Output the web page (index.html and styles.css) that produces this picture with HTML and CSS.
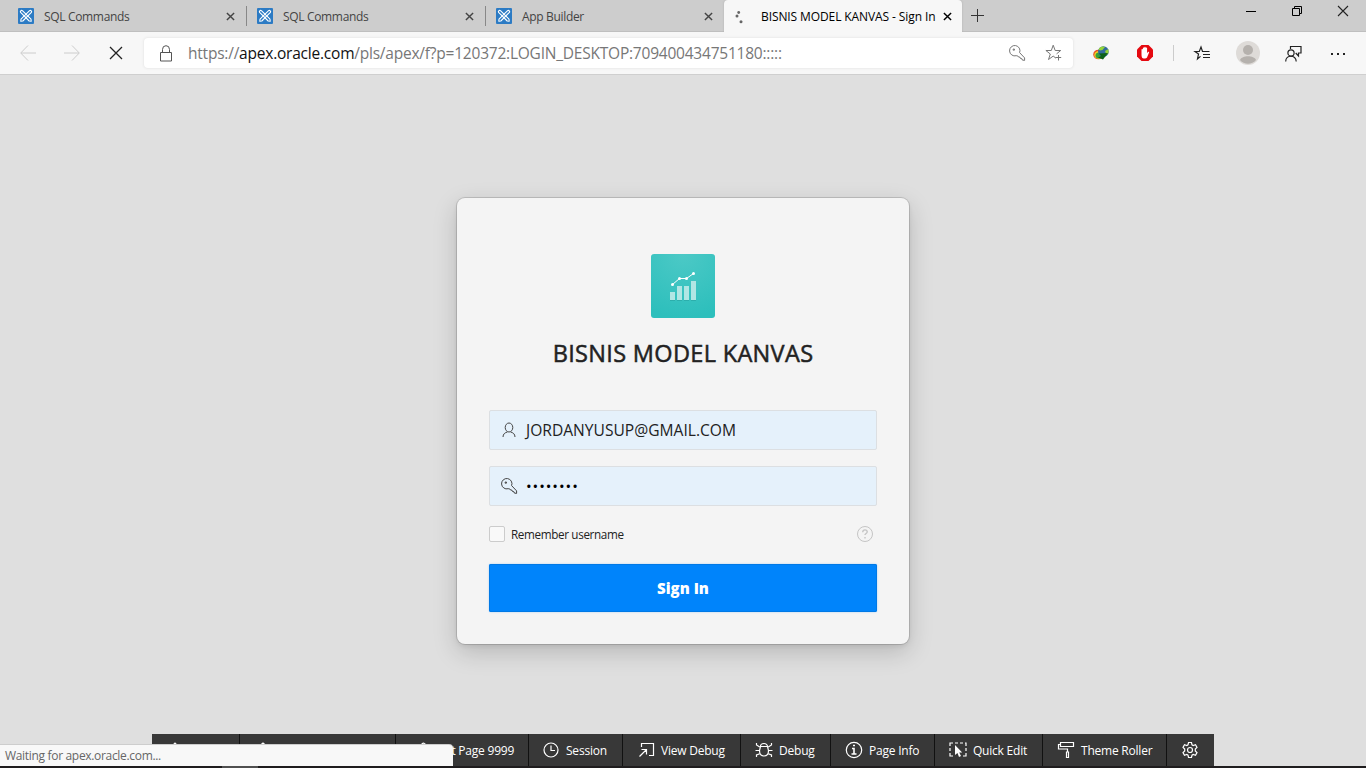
FILE: index.html
```html
<!DOCTYPE html>
<html lang="en">
<head>
<meta charset="utf-8">
<title>BISNIS MODEL KANVAS - Sign In</title>
<link rel="stylesheet" href="styles.css">
</head>
<body>
<svg width="0" height="0" class="defs">
  <symbol id="apex" viewBox="0 0 16 16"><rect width="16" height="16" rx="1" fill="#2c7bc4"/><g fill="none" stroke="#fff" stroke-width="1.1" stroke-linejoin="round"><path d="M2.6 4.4a1.3 1.3 0 0 1 1.800-1.800L13 11.200 13.200 13.200 11.200 13Z"/><path d="M13.400 4.400a1.300 1.300 0 0 0-1.800-1.800L3 11.200 2.800 13.200 4.800 13Z"/></g></symbol>
  <symbol id="close" viewBox="0 0 10 10"><path d="M1 1 9 9M9 1 1 9" fill="none" stroke="currentColor" stroke-width="1.600"/></symbol>
  <symbol id="key" viewBox="0 0 18 18"><path d="M11.6 8.6A5.2 5.2 0 1 0 8.2 11.7L9.7 11.9 10.5 13 12 13.2 12.5 14.5 14 14.8 14.4 16.1 16.6 16.4 16.6 13.9Z M5.2 5h1.2v1.2H5.2Z" fill="none" stroke="currentColor"/></symbol>
</svg>
<div class="screen">
  <header class="tabs">
    <div class="tab"><svg class="fav"><use href="#apex"/></svg><span>SQL Commands</span><svg class="x"><use href="#close"/></svg></div>
    <div class="tab line"><svg class="fav"><use href="#apex"/></svg><span>SQL Commands</span><svg class="x"><use href="#close"/></svg></div>
    <div class="tab line"><svg class="fav"><use href="#apex"/></svg><span class="app">App Builder</span><svg class="x"><use href="#close"/></svg></div>
    <div class="tab active"><svg class="fav" viewBox="0 0 16 16" fill="#666"><circle cx="3.7" cy="4.5" r="1.4"/><circle cx="2" cy="8" r="1.5"/><circle cx="6" cy="13.7" r="1.5"/></svg><span class="current">BISNIS MODEL KANVAS - Sign In</span><svg class="x"><use href="#close"/></svg></div>
    <svg class="plus" viewBox="0 0 14 14"><path d="M7.5 1v13M1 7.5h13" stroke="#333" fill="none"/></svg>
    <div class="window">
      <svg width="10" height="12"><path d="M0 6.5h10" stroke="#000"/></svg>
      <svg width="10" height="12" fill="none" stroke="#000"><path d="M.5 3.5h7v7h-7ZM2.5 3.5v-2h7v7h-2"/></svg>
      <svg width="12" height="12" stroke="#222" stroke-width="1.1"><path d="M1 1 11 11M11 1 1 11"/></svg>
    </div>
  </header>
  <nav class="bar">
    <div class="navs">
      <svg width="16" height="16" fill="none" stroke="#ccc"><path d="M8 .5.7 8 8 15.500M1 8h15"/></svg>
      <svg width="16" height="16" fill="none" stroke="#ccc"><path d="M8 .5 15.300 8 8 15.500M0 8h15"/></svg>
      <svg width="14" height="14" fill="none" stroke="#222" stroke-width="1.3"><path d="M1 1 13 13M13 1 1 13"/></svg>
    </div>
    <div class="address">
      <svg class="lock" width="14" height="17" fill="none" stroke="#555"><path d="M1.500 7.500h11v8.500h-11ZM3.500 7.500V4.500a3.500 3.800 0 0 1 7 0v3"/></svg>
      <span class="url">https://<b>apex.oracle.com</b>/pls/apex/f?p=120372:LOGIN_DESKTOP:709400434751180:::::</span>
      <svg class="akey" width="18" height="18"><use href="#key"/></svg>
      <svg width="18" height="18" fill="none" stroke="#777"><path d="M11 14.200 8.200 12.100 3.500 15.500 5.300 10 .9 6.500h5.400L8.200 1.200l2 5.300h5.500L11.600 9.800M13.500 11v5.500M10.700 13.500h5.500"/></svg>
    </div>
    <div class="extras">
      <svg class="idm" viewBox="0 0 16 16"><ellipse cx="5.500" cy="9.500" rx="5.300" ry="4.800" fill="#e64b25"/><ellipse cx="5.700" cy="10" rx="4.500" ry="3.900" fill="#f4ce24"/><ellipse cx="6" cy="10.500" rx="3.500" ry="3" fill="#38a236"/><circle cx="10.400" cy="6.500" r="5.300" fill="#326b9b"/><path d="M5.500 4.500C7 1 10 1 12 2L9.500 5 7 5.500ZM12 6l3.500-2v4l-2 2Z" fill="#94d538"/><path d="M6 8.500 15 8 10 14.500 5 12.500 8 11Z" fill="#0c6118"/></svg>
      <svg class="block" viewBox="0 0 16 16"><path d="M4.500 0h7L16 4.500v7L11.500 16h-7L0 11.500v-7Z" fill="#e50910"/><path d="M4.500 7.500V4.600a.7.7 0 0 1 1.400 0V3.100a.7.7 0 0 1 1.400 0V2.500a.7.7 0 0 1 1.400 0v.8a.7.7 0 0 1 1.400 0V8l1-1c.9-.6 1.300.1.900.7L10 12.500c-.8 1.400-4.300 1.500-5 0-.5-1-.5-3-.5-5Z" fill="#fff"/></svg>
      <i></i>
      <svg class="fave" viewBox="0 0 17 16" fill="none" stroke="#222" stroke-width="1.200"><path d="M6.500 11.400 3.500 14l1-4.900L1 6.500h4.300L7 2l1.500 4.500h7M9 9.500h7M9 12.500h7"/></svg>
      <svg class="avatar" viewBox="0 0 24 24"><circle cx="12" cy="12" r="12" fill="#dedbd8"/><circle cx="12" cy="9" r="5" fill="#b5b1ad"/><path d="M4 19c2-5 14-5 16 0-4 5-12 5-16 0Z" fill="#b5b1ad"/></svg>
      <svg class="feedback" viewBox="0 0 17 17" fill="none" stroke="#222" stroke-width="1.200"><path d="M5.500 4V1.500h10.500v6.500h-2.500V11l-2.800-3"/><circle cx="6" cy="8" r="3.100"/><path d="M.7 16.500c0-7 10.500-7 10.500 0"/></svg>
      <svg class="dots" viewBox="0 0 15 3" fill="#222"><path d="M0 1h2v2H0ZM6 1h2v2H6ZM12 1h2v2h-2Z"/></svg>
    </div>
  </nav>
  <main>
    <form class="card">
      <svg class="logo" viewBox="0 0 64 64"><defs><radialGradient id="teal" cx=".5" cy="0" r="1"><stop stop-color="#4cc9c6"/><stop offset="1" stop-color="#2dbfbc"/></radialGradient></defs><rect width="64" height="64" rx="3" fill="url(#teal)"/><path d="M19 46.500h5M26 46.500h5M33 46.500h5M40 46.500h5" stroke="#249d9b" opacity=".5"/><path d="M19 38h5v8h-5ZM26 32h5v14h-5ZM33 32h5v14h-5ZM40 27h5v19h-5Z" fill="#b1e6e4"/><path d="m21.500 30.500 7-6h7l7-5" fill="none" stroke="#fff"/><g fill="#fff"><circle cx="21.500" cy="30.500" r="1.500"/><circle cx="28.500" cy="24.500" r="1.500"/><circle cx="35.500" cy="24.500" r="1.500"/><circle cx="42.500" cy="19.500" r="1.500"/></g></svg>
      <h1><span>BISNIS MODEL KANVAS</span></h1>
      <div class="field"><svg width="18" height="18" fill="none" stroke="#444"><path d="M9 2a3.700 4.400 0 0 1 0 9 3.700 4.400 0 0 1 0-9M3 16c0-3 2-4.400 4.400-5M15 16c0-3-2-4.400-4.400-5"/></svg><span>JORDANYUSUP@GMAIL.COM</span></div>
      <div class="field"><svg width="18" height="18"><use href="#key"/></svg><span class="password">••••••••</span></div>
      <div class="remember"><i></i><span>Remember username</span><svg width="18" height="18" fill="none" stroke="#c5c5c5"><circle cx="9" cy="9" r="7.500"/><path d="M6.700 7.200c.1-3.200 4.800-2.800 4.500-.2-.2 1.500-2.200 1.500-2.200 3.100M9 12v1.500" stroke-width="1.400"/></svg></div>
      <div class="signin"><span>Sign In</span></div>
    </form>
  </main>
  <footer class="dev">
    <div class="d1"><svg viewBox="0 0 18 18"><path d="M3 8l6-6 6 6v8H3Z"/></svg></div>
    <div class="d2"><svg viewBox="0 0 18 18"><path d="m4 6 5-4 5 4v10H4Z"/></svg></div>
    <div class="d3"><svg viewBox="0 0 18 18"><path d="m3 13 8-10q2-2 4 1L6 15l-4 1Z"/></svg><span>Edit Page 9999</span></div>
    <div class="d4"><svg viewBox="0 0 18 18"><circle cx="9" cy="9" r="7"/><path d="M9 4.500V9.500h4"/></svg><span>Session</span></div>
    <div class="d5"><svg viewBox="0 0 18 18"><path d="M4.500 6V2.500h12v12H12M2.500 15.500 9.500 8.500M4.500 8.500h5v5"/></svg><span>View Debug</span></div>
    <div class="d6"><svg viewBox="0 0 18 18"><path d="M5.500 5.500h7l1 4c0 4-2 5.500-4.500 5.500s-4.500-1.500-4.500-5.500ZM5.500 5.500a3.500 3 0 0 1 7 0M1.500 2v2l4 2.500M16.500 2v2l-4 2.500M.5 9.500h4M13.500 9.500h4M1.500 16v-2l4-1.500M16.500 16v-2l-4-1.500"/></svg><span>Debug</span></div>
    <div class="d7"><svg viewBox="0 0 18 18"><circle cx="9" cy="9" r="7.700"/><path d="M7 7.500h2V13M6.500 13h5M8 4.500h2" stroke-width="1.600"/></svg><span>Page Info</span></div>
    <div class="d8"><svg viewBox="0 0 18 18"><path d="M1 5V2h3M6 2h3M11 2h3M16 2h1v3M17 7v3M17 12v3h-3M1 7v3M1 12v3h3"/><path d="M6 4v10l2.500-2 1.500 4 2-1-1.800-3.500h3Z" fill="#fff" stroke="none"/></svg><span>Quick Edit</span></div>
    <div class="d9"><svg viewBox="0 0 18 18"><path d="M3.500 1.500h13v4h-13ZM3.500 3.500h-2v4.500h9V11M9.500 11h2v5.500h-2Z"/></svg><span>Theme Roller</span></div>
    <div class="d10"><svg viewBox="0 0 18 18"><path d="m7.500 1.500h3l.5 2.300 1.200.7 2.300-.7L16 6.400l-1.700 1.700v1.800l1.700 1.700-1.500 2.600-2.300-.7-1.200.7-.5 2.300h-3L7 14.200l-1.200-.7-2.300.7L2 11.600l1.700-1.700V8.100L2 6.400l1.500-2.600 2.300.7L7 3.800Z"/><circle cx="9" cy="9" r="2.500"/></svg></div>
  </footer>
  <div class="taskbar"><i></i></div>
  <div class="status"><span>Waiting for apex.oracle.com...</span></div>
</div>
</body>
</html>
```
FILE: styles.css
```css
*{box-sizing:border-box}
body{margin:0;font:12px "Open Sans","Noto Sans",sans-serif;color:#222}
svg{display:block;flex:none;overflow:visible}
.defs{position:absolute}
span{white-space:nowrap}
.screen{width:1366px;height:768px;display:flex;flex-direction:column;position:relative;overflow:hidden;background:#dfdfdf}
.tabs{height:32px;display:flex;background:#cdcdcd;padding-left:7px;box-shadow:inset 0 -1px #bfbfbf}
.tab{width:239px;height:32px;display:flex;align-items:center;padding:0 11px 0 11px;color:#444;position:relative}
.tab.line::before{content:"";position:absolute;left:0;top:6px;width:1px;height:20px;background:#888}
.fav{width:16px;height:16px}
.tab span{margin-left:10px;letter-spacing:-.33px}
.tab .current{margin-left:10px;letter-spacing:-.1px}
.x{width:9px;height:9px;margin-left:auto}
.tab.active{width:238px;padding-right:10px;background:#f7f7f7;color:#000;border-radius:4px 4px 0 0;box-shadow:0 0 2px #aaa;clip-path:inset(0 -3px)}
.plus{width:14px;height:14px;margin:8px 0 0 8px}
.window{display:flex;gap:36px;margin:5px 17px 0 auto}
.window svg:first-child,.window svg:nth-child(2){margin-right:-1px;margin-left:1px}
.bar{height:43px;background:#f7f7f7;border-bottom:1px solid #cfcfcf;display:flex;align-items:center;z-index:1}
.navs{width:144px;display:flex;align-items:center;gap:28px;padding-left:20px}
.navs svg:last-child{margin-left:1px}
.address{width:929px;height:30px;background:#fff;border-radius:4px;box-shadow:0 0 3px #ddd;display:flex;align-items:center;padding:0 10px 0 15px}
.url{font-size:15.500px;margin-left:15px;color:#777;letter-spacing:-.22px}
.url b{font-weight:400;color:#111}
.akey{color:#777;margin-left:auto;margin-right:19px}
.extras{flex:1;display:flex;align-items:center}
.idm{width:16px;height:16px;margin-left:20px}
.block{width:16px;height:16px;margin-left:28px}
.extras i{width:1px;height:16px;background:#ccc;margin-left:20px}
.fave{width:17px;height:16px;margin-left:20px}
.avatar{width:24px;height:24px;margin-left:25px}
.feedback{width:17px;height:17px;margin-left:25px}
.dots{width:15px;height:3px;margin-left:29px}
main{height:659px;padding-top:123px;display:flex;justify-content:center;align-items:flex-start}
.card{width:452px;height:446px;background:#f4f4f4;border-radius:8px;padding:56px 32px 32px;box-shadow:0 0 0 1px rgba(0,0,0,.13),0 8px 24px rgba(0,0,0,.18),0 2px 5px rgba(0,0,0,.08)}
.logo{width:64px;height:64px;margin:0 auto}
h1{font-size:23.500px;line-height:32px;font-weight:500;letter-spacing:.33px;-webkit-text-stroke:.5px #222;margin:19px 0 41px;display:flex;justify-content:center}
.field{height:40px;border:1px solid #dcdfe2;border-radius:2px;background:#e5f1fb;display:flex;align-items:center;padding-left:10px;margin-bottom:16px;color:#444}
.field span{margin-left:8px;font-size:15.600px;color:#222}
.field .password{font-size:15px;letter-spacing:.95px;color:#000}
.remember{height:18px;display:flex;align-items:center;margin:19px 3px 21px 0}
.remember i{width:16px;height:16px;border:1px solid #ccc;border-radius:2px;background:#f9f9f9}
.remember span{margin-left:6px;font-size:11.700px;letter-spacing:-.35px}
.remember svg{margin-left:auto}
.signin{height:48px;background:#0084fb;border-radius:2px;box-shadow:inset 0 0 0 1px #0079e6,0 0 2px #9cc9f4;display:flex;align-items:center;justify-content:center;color:#fff;font-size:15px;font-weight:800}
.dev{width:1062px;height:32px;margin-left:152px;background:#383838;color:#fff;display:flex}
.dev>div{display:flex;align-items:center;border-right:1px solid #111;padding-left:14px}
.dev svg{width:18px;height:18px;fill:none;stroke:#fff;stroke-width:1.200}
.dev span{margin-left:6px;letter-spacing:-.22px}
.d1{width:88px}.d2{width:156px}.d3{width:133px}.d4{width:94px}.d5{width:118px}.d6{width:90px}.d7{width:104px}.d8{width:108px}.d9{width:124px}.dev .d10{width:47px;border:0}
.dev .d3{padding-left:15px}.dev .d4{padding-left:13px}
.taskbar{height:2px;background:#1f1d1e}
.taskbar i{display:block;width:36px;height:2px;margin-left:222px;background:#505050}
.status{position:absolute;left:0;top:745px;width:453px;height:21px;background:#f8f8f8;border-radius:0 4px 0 0;box-shadow:0 -1px #cdcdcd;color:#666;padding-left:5px;line-height:21px;letter-spacing:-.32px}
```
